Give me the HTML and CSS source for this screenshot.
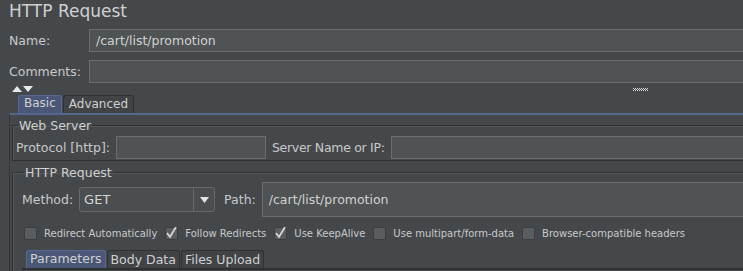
FILE: index.html
```html
<!DOCTYPE html>
<html lang="en">
<head>
  <meta charset="UTF-8">
  <title>HTTP Request</title>
  <link rel="stylesheet" href="styles.css">
</head>
<body>
  <div class="page">
    <h1 class="title">HTTP Request</h1>

    <div class="row">
      <label class="label">Name:</label>
      <div class="field">/cart/list/promotion</div>
    </div>
    <div class="row comments">
      <label class="label">Comments:</label>
      <div class="field"></div>
    </div>

    <div class="splitter">
      <span class="arrows">
        <svg width="22" height="6" viewBox="0 0 22 6"><path d="M0 6 L5 0 L10 6 Z M11 0 L21 0 L16 6 Z" fill="#e8e8e8"/></svg>
      </span>
      <span class="grip"></span>
    </div>

    <div class="tabs main-tabs">
      <span class="tab active">Basic</span>
      <span class="tab">Advanced</span>
    </div>
    <div class="panel">
      <fieldset class="group">
        <legend>Web Server</legend>
        <div class="server-row">
          <label class="label-inline">Protocol [http]:</label>
          <div class="field protocol"></div>
          <label class="label-inline tight">Server Name or IP:</label>
          <div class="field grow"></div>
        </div>
      </fieldset>

      <fieldset class="group http">
        <legend>HTTP Request</legend>
        <div class="method-row">
          <label class="label-inline">Method:</label>
          <div class="select">
            <span class="select-value">GET</span>
            <span class="select-btn">
              <svg width="9" height="6" viewBox="0 0 9 6"><path d="M0 0 L9 0 L4.5 6 Z" fill="#e4e4e4"/></svg>
            </span>
          </div>
          <label class="label-inline">Path:</label>
          <div class="field grow path">/cart/list/promotion</div>
        </div>

        <div class="checks">
          <span class="check"><span class="box"></span>Redirect Automatically</span>
          <span class="check"><span class="box"><svg width="12" height="12" viewBox="0 0 12 12"><path d="M2 6 L5 10 L11 0" fill="none" stroke="#d6d6d6" stroke-width="1.8"/></svg></span>Follow Redirects</span>
          <span class="check"><span class="box"><svg width="12" height="12" viewBox="0 0 12 12"><path d="M2 6 L5 10 L11 0" fill="none" stroke="#d6d6d6" stroke-width="1.8"/></svg></span>Use KeepAlive</span>
          <span class="check"><span class="box"></span>Use multipart/form-data</span>
          <span class="check"><span class="box"></span>Browser-compatible headers</span>
        </div>

        <div class="tabs sub-tabs">
          <span class="tab active">Parameters</span>
          <span class="tab">Body Data</span>
          <span class="tab">Files Upload</span>
        </div>
        <div class="sub-panel"></div>
      </fieldset>
    </div>
  </div>
</body>
</html>
```

FILE: styles.css
```css
html, body {
  overflow: hidden;
}
body {
  margin: 0;
  background: #45484b;
  color: #c7c9ca;
  font-family: "DejaVu Sans", Verdana, sans-serif;
  font-size: 12px;
}
.page {
  width: 800px;
}
.title {
  margin: 0;
  padding-left: 9px;
  height: 24px;
  line-height: 22px;
  font-size: 17px;
  font-weight: normal;
  color: #cfd0d1;
}
.row {
  display: flex;
  align-items: center;
  margin-top: 5px;
  padding-left: 9px;
}
.row.comments {
  margin-top: 8px;
}
.label {
  width: 80px;
  font-size: 12.5px;
}
.field {
  box-sizing: border-box;
  height: 23px;
  line-height: 21px;
  background: #4f5354;
  border: 1px solid #6b6e6f;
  padding-left: 6px;
  font-size: 12.5px;
  color: #d0d2d3;
}
.row .field {
  flex: 1;
}
.splitter {
  display: flex;
  align-items: center;
  height: 12px;
  padding-left: 12px;
}
.arrows svg {
  display: block;
}
.grip {
  margin-left: 599px;
  width: 15px;
  height: 3px;
  background:
    repeating-linear-gradient(90deg, #d8d8d8 0 1px, transparent 1px 2px) 0 0 / 15px 1px no-repeat,
    repeating-linear-gradient(90deg, transparent 0 1px, #d8d8d8 1px 2px) 0 1px / 15px 1px no-repeat,
    repeating-linear-gradient(90deg, #d8d8d8 0 1px, transparent 1px 2px) 0 2px / 15px 1px no-repeat;
}
.tabs {
  display: flex;
  align-items: flex-end;
}
.main-tabs {
  padding-left: 18px;
  height: 18px;
}
.tab {
  box-sizing: border-box;
  height: 18px;
  line-height: 17px;
  padding: 0 5px;
  margin-right: 1px;
  border: 1px solid #2f3133;
  border-bottom: none;
  border-radius: 3px 3px 0 0;
  background: #414447;
  color: #cfd0d1;
}
.tab.active {
  background: #4a5777;
  border-color: #5a6890;
  line-height: 15px;
}
.panel {
  margin-left: 9px;
  border-top: 2px solid #56678f;
  border-left: 1px solid #34373a;
  padding: 3px 0 0 2px;
}
.group {
  margin: 0;
  padding: 0 0 1px 3px;
  border: 1px solid #2f3133;
  box-shadow: inset 1px 1px 0 #55585a;
}
.group legend {
  padding: 0 1px;
  margin-left: 2px;
  line-height: 15px;
  font-size: 12.5px;
  color: #cfd0d1;
}
.server-row {
  display: flex;
  align-items: center;
  margin-top: 3px;
}
.label-inline {
  padding-right: 6px;
  font-size: 12.5px;
}
.label-inline.tight {
  letter-spacing: -0.3px;
}
.protocol {
  width: 150px;
  margin-right: 6px;
}
.grow {
  flex: 1;
}
.http {
  margin-top: 4px;
  padding-left: 9px;
}
.method-row {
  display: flex;
  align-items: center;
  margin-top: 2px;
}
.select {
  display: flex;
  box-sizing: border-box;
  width: 136px;
  height: 25px;
  margin-right: 9px;
  border: 1px solid #66696b;
  border-radius: 3px;
  background: #4b4e50;
}
.select-value {
  flex: 1;
  line-height: 23px;
  padding-left: 4px;
  font-size: 13px;
  color: #d4d5d6;
}
.select-btn {
  display: flex;
  align-items: center;
  justify-content: center;
  width: 20px;
  border-left: 1px solid #66696b;
}
.path {
  height: 35px;
  line-height: 33px;
}
.checks {
  display: flex;
  align-items: center;
  height: 24px;
  margin-top: 4px;
  padding-left: 2px;
  font-size: 10px;
}
.check {
  display: flex;
  align-items: center;
  margin-right: 8px;
}
.box {
  box-sizing: border-box;
  width: 13px;
  height: 13px;
  margin-right: 7px;
  border: 1px solid #3b3d3f;
  border-radius: 2px;
  background: #5a5d5f;
}
.box svg {
  display: block;
  margin: -1px 0 0 -1px;
}
.sub-tabs {
  margin-top: 5px;
  padding-left: 4px;
  height: 18px;
}
.sub-tabs .tab {
  padding: 0 3px;
  margin-right: 1px;
  font-size: 12.5px;
}
.sub-panel {
  border-top: 2px solid #2f3133;
  height: 6px;
}
```
